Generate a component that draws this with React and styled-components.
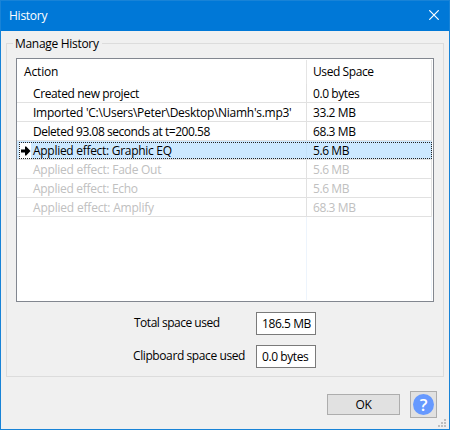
import React from "react";
import styled, { createGlobalStyle } from "styled-components";

const GlobalStyle = createGlobalStyle`
  *, *::before, *::after { box-sizing: border-box; }
  body { margin: 0; overflow: hidden; }
`;

const Dialog = styled.div`
  position: relative;
  display: flex;
  flex-direction: column;
  width: 450px;
  height: 430px;
  border: 1px solid #1883d7;
  background: #f0f0f0;
  color: #000;
  font-family: "Open Sans", "Noto Sans", sans-serif;
  font-size: 12px;
  line-height: 16px;
  letter-spacing: -0.35px;
  white-space: nowrap;
`;

const Text = styled.span`
  letter-spacing: ${(p) => p.$spacing ?? -0.35}px;
`;

const TitleBar = styled.header`
  display: flex;
  justify-content: space-between;
  height: 30px;
  padding: 7px 10px 0 8px;
  background: #0078d7;
  color: #fff;
  svg { display: block; margin-top: 2px; }
`;

const Group = styled.fieldset`
  display: flex;
  flex-direction: column;
  width: 438px;
  height: 342px;
  margin: 4px 0 0 5px;
  padding: 7px 9px 0;
  min-width: 0;
  border: 1px solid #dcdcdc;
`;

const Legend = styled.legend`
  height: 16px;
  margin-left: -3px;
  padding: 1px 3px 0 2px;
`;

const List = styled.div`
  display: flex;
  flex-direction: column;
  width: 418px;
  height: 244px;
  padding: 1px 1px 1px 0;
  border: 1px solid #828790;
  background: #fff;
`;

const HeaderRow = styled.div`
  display: grid;
  grid-template-columns: 290px 125px;
  height: 24px;
  span { padding: 4px 0 0 7px; border-right: 1px solid #e5e5e5; }
  span + span { padding-left: 6px; }
`;

const Row = styled.div`
  position: relative;
  display: grid;
  grid-template-columns: 290px 125px;
  height: 19px;
  border-bottom: 1px solid #e1e1e1;
  color: ${(p) => (p.$undone ? "#c0c0c0" : "#000")};
`;

const Cell = styled.div`
  display: flex;
  padding: 2px 0 0 ${(p) => (p.$first ? 2 : 6)}px;
  border-right: 1px solid ${(p) => (p.$selected ? "#c5e1f8" : "#e1e1e1")};
  background: ${(p) => (p.$selected ? "#cce8ff" : "transparent")};
`;

const IconSlot = styled.div`
  width: 12px;
  height: 16px;
  margin-right: 2px;
  background: ${(p) => (p.$filled ? "#fff" : "transparent")};
  svg { display: block; }
`;

const FocusRing = styled.div`
  position: absolute;
  inset: 1px 0 0 2px;
  background:
    repeating-linear-gradient(90deg, #222 0 1px, transparent 1px 2px) top / 100% 1px no-repeat,
    repeating-linear-gradient(90deg, #222 0 1px, transparent 1px 2px) bottom / 100% 1px no-repeat,
    repeating-linear-gradient(#222 0 1px, transparent 1px 2px) left / 1px 100% no-repeat,
    repeating-linear-gradient(#222 0 1px, transparent 1px 2px) right / 1px 100% no-repeat;
`;

const EmptyArea = styled.div`
  display: grid;
  grid-template-columns: 290px 125px;
  flex: 1;
  div { border-right: 1px solid #edf4fc; }
`;

const Totals = styled.div`
  display: grid;
  grid-template-columns: 113px 60px;
  column-gap: 10px;
  row-gap: 10px;
  margin: 10px 0 0 117px;
`;

const TotalLabel = styled.div`
  padding: 3px 0 0 ${(p) => p.$indent}px;
`;

const Field = styled.div`
  height: 23px;
  padding: 3px 0 0 5px;
  border: 1px solid #7a7a7a;
  background: #fff;
`;

const Footer = styled.footer`
  display: flex;
  align-items: center;
  justify-content: flex-end;
  gap: 10px;
  height: 27px;
  margin: 14px 12px 0 0;
`;

const Button = styled.button`
  display: flex;
  align-items: center;
  justify-content: center;
  width: ${(p) => p.$width}px;
  height: ${(p) => p.$height}px;
  padding: 0;
  border: 1px solid #adadad;
  border-radius: 0;
  background: #e1e1e1;
  color: #000;
  font: inherit;
`;

const HelpBadge = styled.span`
  display: flex;
  align-items: center;
  justify-content: center;
  width: 21px;
  height: 21px;
  border-radius: 50%;
  background: #6699ff;
  color: #fff;
  font-size: 17px;
  font-weight: 600;
  line-height: 21px;
  letter-spacing: 0;
`;

const Grip = styled.svg`
  position: absolute;
  right: 3px;
  bottom: 2px;
`;

const history = [
  { action: "Created new project", size: "0.0 bytes", spacing: -0.38 },
  { action: "Imported 'C:\\Users\\Peter\\Desktop\\Niamh's.mp3'", size: "33.2 MB", spacing: -0.28 },
  { action: "Deleted 93.08 seconds at t=200.58", size: "68.3 MB", spacing: -0.46 },
  { action: "Applied effect: Graphic EQ", size: "5.6 MB", selected: true, spacing: -0.29 },
  { action: "Applied effect: Fade Out", size: "5.6 MB", undone: true, spacing: -0.26 },
  { action: "Applied effect: Echo", size: "5.6 MB", undone: true, spacing: -0.28 },
  { action: "Applied effect: Amplify", size: "68.3 MB", undone: true, spacing: -0.2 },
];

const CurrentArrow = () => (
  <svg width="12" height="16" viewBox="0 0 12 16">
    <path d="M2 6.5H6V3.5H7.2L11.5 8L7.2 12.5H6V9.5H2Z" fill="#000" />
  </svg>
);

export default function App() {
  return (
    <>
      <GlobalStyle />
      <Dialog>
        <TitleBar>
          <Text $spacing={-0.25}>History</Text>
          <svg width="10" height="10" viewBox="0 0 10 10">
            <path d="M.3 .3L9.7 9.7M9.7 .3L.3 9.7" stroke="#fff" strokeWidth="1.2" />
          </svg>
        </TitleBar>
        <Group>
          <Legend><Text $spacing={-0.3}>Manage History</Text></Legend>
          <List>
            <HeaderRow>
              <Text $spacing={-0.15}>Action</Text>
              <Text $spacing={-0.42}>Used Space</Text>
            </HeaderRow>
            {history.map((item) => (
              <Row key={item.action} $undone={item.undone}>
                <Cell $first $selected={item.selected}>
                  <IconSlot $filled={item.selected}>{item.selected && <CurrentArrow />}</IconSlot>
                  <Text $spacing={item.spacing}>{item.action}</Text>
                </Cell>
                <Cell $selected={item.selected}>
                  <Text $spacing={-0.42}>{item.size}</Text>
                </Cell>
                {item.selected && <FocusRing />}
              </Row>
            ))}
            <EmptyArea><div /><div /></EmptyArea>
          </List>
          <Totals>
            <TotalLabel $indent={1}><Text $spacing={-0.49}>Total space used</Text></TotalLabel>
            <Field><Text $spacing={-0.42}>186.5 MB</Text></Field>
            <TotalLabel $indent={0}><Text $spacing={-0.4}>Clipboard space used</Text></TotalLabel>
            <Field><Text $spacing={-0.42}>0.0 bytes</Text></Field>
          </Totals>
        </Group>
        <Footer>
          <Button $width={73} $height={21}><Text>OK</Text></Button>
          <Button $width={27} $height={27} aria-label="Help"><HelpBadge>?</HelpBadge></Button>
        </Footer>
        <Grip width="8" height="8" viewBox="0 0 8 8" fill="#bfbfbf" shapeRendering="crispEdges">
          <path d="M6 0h2v2h-2zM3 3h2v2h-2zM6 3h2v2h-2zM0 6h2v2h-2zM3 6h2v2h-2zM6 6h2v2h-2z" />
        </Grip>
      </Dialog>
    </>
  );
}
